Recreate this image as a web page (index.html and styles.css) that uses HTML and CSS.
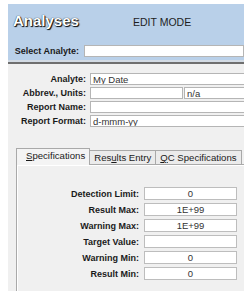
FILE: index.html
```html
<!DOCTYPE html>
<html lang="en">
<head>
    <meta charset="UTF-8">
    <title>Analyses</title>
    <link rel="stylesheet" href="styles.css">
</head>
<body>

    <div class="page">
        <div class="top">
            <div class="title-row">
                <span class="title">Analyses</span>
                <span class="mode">EDIT MODE</span>
            </div>
            <div class="select-row">
                <label>Select Analyte:</label>
                <input type="text" class="box">
            </div>
        </div>

        <div class="details">
            <div class="form">
                <label>Analyte:</label>
                <input type="text" class="box" value="My Date">

                <label>Abbrev., Units:</label>
                <div class="pair">
                    <input type="text" class="box abbrev">
                    <input type="text" class="box" value="n/a">
                </div>

                <label>Report Name:</label>
                <input type="text" class="box">

                <label>Report Format:</label>
                <input type="text" class="box" value="d-mmm-yy">
            </div>

            <div class="tabs">
                <span class="tab active"><u>S</u>pecifications</span>
                <span class="tab">Res<u>u</u>lts Entry</span>
                <span class="tab"><u>Q</u>C Specifications</span>
            </div>

            <div class="panel">
                <!-- specification limits -->
                <div class="limits">
                    <label>Detection Limit:</label>
                    <input type="text" class="box num" value="0">
                    <label>Result Max:</label>
                    <input type="text" class="box num" value="1E+99">
                    <label>Warning Max:</label>
                    <input type="text" class="box num" value="1E+99">
                    <label>Target Value:</label>
                    <input type="text" class="box num">
                    <label>Warning Min:</label>
                    <input type="text" class="box num" value="0">
                    <label>Result Min:</label>
                    <input type="text" class="box num" value="0">
                </div>
            </div>
        </div>
    </div>

</body>
</html>
```

FILE: styles.css
```css
html, body {
    margin: 0;
    overflow: hidden;
    background-color: #ffffff;
}
.page {
    margin: 4px 0 0 8px;
    width: 236px;
    height: 287px;
    overflow: hidden;
    font-family: "Liberation Sans", Arial, sans-serif;
    color: #1a1a1a;
}
.top {
    background-color: #b9d0e9;
    height: 56px;
    border-bottom: 2px solid #6f6f6f;
    box-shadow: inset 0 -2px 0 #d3dbe4;
    padding-bottom: 2px;
}
.title-row {
    display: flex;
    align-items: baseline;
    padding: 8px 0 0 5px;
    height: 16px;
}
.title {
    font-size: 15px;
    font-weight: bold;
    color: #ffffff;
    text-shadow: 1px 1px 1px #000, 0 0 1px #000;
    width: 120px;
}
.mode {
    font-size: 10.5px;
    color: #1e1e1e;
}
.select-row {
    display: flex;
    align-items: center;
    margin-top: 17px;
}
.select-row label {
    width: 78px;
    text-align: right;
    margin-right: 5px;
}
.select-row .box {
    width: 160px;
    flex: none;
}
label {
    font-size: 9px;
    font-weight: bold;
    color: #1a1a1a;
    white-space: nowrap;
}
.box {
    box-sizing: border-box;
    height: 12px;
    margin: 0;
    padding: 0 2px;
    border: 1px solid #b5b5b5;
    background-color: #ffffff;
    font-family: "Liberation Sans", Arial, sans-serif;
    font-size: 9.5px;
    color: #333;
    outline: none;
}
.details {
    background-color: #f0f0f0;
    height: 223px;
    padding-top: 9px;
}
.form {
    display: grid;
    grid-template-columns: 78px 160px;
    column-gap: 4px;
    row-gap: 2px;
    align-items: center;
}
.form label {
    text-align: right;
}
.form .box {
    width: 100%;
}
.pair {
    display: flex;
    gap: 1px;
}
.pair .abbrev {
    width: 93px;
    flex: none;
}
.pair .box:last-child {
    flex: 1;
}
.tabs {
    display: flex;
    align-items: flex-end;
    margin: 21px 0 0 8px;
    height: 16px;
}
.tab {
    box-sizing: border-box;
    height: 14px;
    padding: 0 4px;
    font-size: 9.6px;
    line-height: 13px;
    color: #1a1a1a;
    background-color: #ebebeb;
    border: 1px solid #a9a9a9;
    border-bottom: none;
    margin-left: -1px;
    white-space: nowrap;
}
.tab:first-child {
    margin-left: 0;
}
.tab.active {
    height: 17px;
    padding: 0 4px 0 9px;
    background-color: #f4f4f4;
    margin-bottom: -1px;
    position: relative;
    z-index: 1;
}
.panel {
    margin-left: 8px;
    border-top: 1px solid #a9a9a9;
    border-left: 1px solid #a9a9a9;
    box-shadow: inset 1px 1px 0 #ffffff;
    padding-top: 22px;
    height: 110px;
}
.limits {
    display: grid;
    grid-template-columns: 122px 93px;
    column-gap: 5px;
    row-gap: 3px;
    align-items: center;
}
.limits label {
    text-align: right;
}
.limits .box {
    height: 13px;
    width: 93px;
    text-align: center;
    border-color: #bdbdbd;
}
```
